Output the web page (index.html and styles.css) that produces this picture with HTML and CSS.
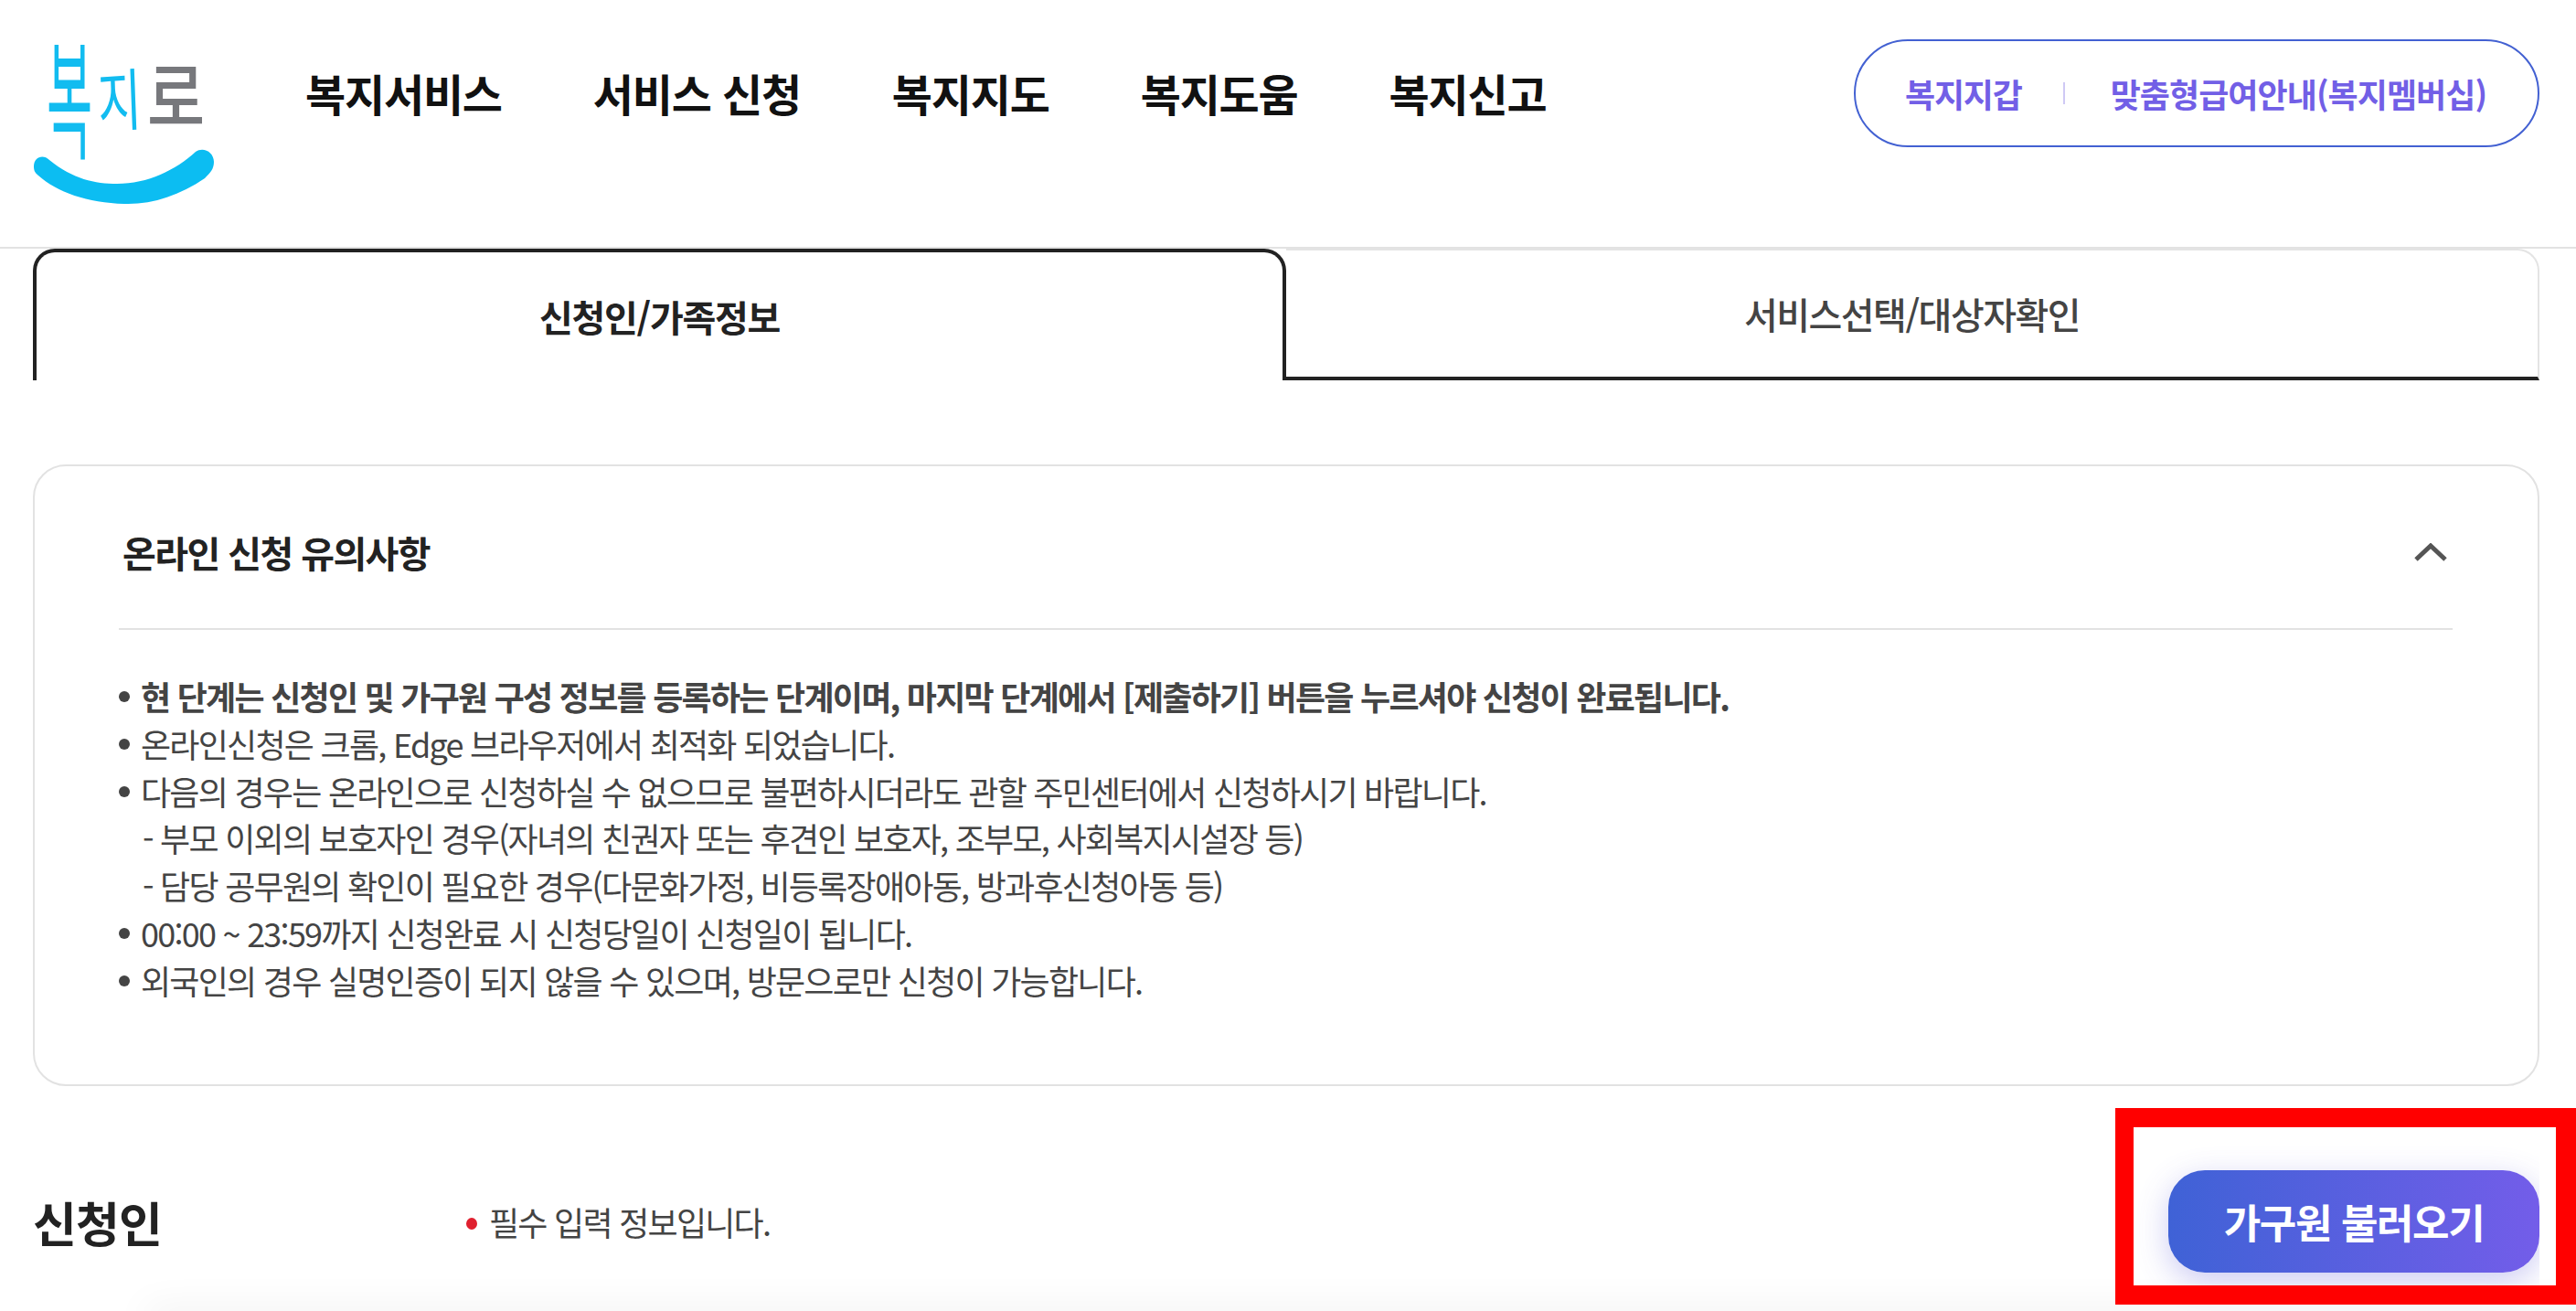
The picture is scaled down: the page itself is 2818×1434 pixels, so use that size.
FILE: index.html
```html
<!DOCTYPE html>
<html lang="ko">
<head>
<meta charset="utf-8"/>
<title>복지로</title>
<link rel="stylesheet" href="styles.css">
</head>
<body>
<!-- 상단 메뉴 -->
<header class="site-header">
  <a class="logo">
    <svg viewBox="0 0 200 190" width="200" height="190">
      <text class="logo-mark" transform="translate(15 127) scale(1.05 2.7)">복</text>
      <text class="logo-mark" transform="translate(72 103) scale(1 1.42) rotate(-3)">지</text>
      <text class="logo-mark logo-gray" transform="translate(125 101) scale(1.32 1.6)">로</text>
      <path class="logo-smile" d="M1 146C1 136 11 132 18 139C44 160 68 165 92 165C126 165 156 150 178 130C186 124 198 130 198 141C198 149 194 153 188 159C160 178 130 188 100 187C60 186 26 174 6 156C2 153 1 150 1 146Z"></path>
    </svg>
  </a>
  <nav class="main-nav">
    <a>복지서비스</a>
    <a>서비스 신청</a>
    <a>복지지도</a>
    <a>복지도움</a>
    <a>복지신고</a>
  </nav>
  <div class="util-pill">
    <a>복지지갑</a>
    <span class="util-divider"></span>
    <a class="util-long">맞춤형급여안내(복지멤버십)</a>
  </div>
</header>

<!-- 탭 -->
<div class="tabs">
  <div class="tab tab-active">신청인/가족정보</div>
  <div class="tab">서비스선택/대상자확인</div>
</div>

<!-- 유의사항 -->
<section class="notice-card">
  <div class="notice-head">
    <h3>온라인 신청 유의사항</h3>
    <svg class="chevron" viewBox="0 0 36 20" width="36" height="20">
      <path d="M2 18L18 3L34 18"></path>
    </svg>
  </div>
  <ul class="notice-list">
    <li class="strong">현 단계는 신청인 및 가구원 구성 정보를 등록하는 단계이며, 마지막 단계에서 [제출하기] 버튼을 누르셔야 신청이 완료됩니다.</li>
    <li>온라인신청은 크롬, Edge 브라우저에서 최적화 되었습니다.</li>
    <li>다음의 경우는 온라인으로 신청하실 수 없으므로 불편하시더라도 관할 주민센터에서 신청하시기 바랍니다.</li>
    <li class="sub">- 부모 이외의 보호자인 경우(자녀의 친권자 또는 후견인 보호자, 조부모, 사회복지시설장 등)</li>
    <li class="sub">- 담당 공무원의 확인이 필요한 경우(다문화가정, 비등록장애아동, 방과후신청아동 등)</li>
    <li>00:00 ~ 23:59까지 신청완료 시 신청당일이 신청일이 됩니다.</li>
    <li>외국인의 경우 실명인증이 되지 않을 수 있으며, 방문으로만 신청이 가능합니다.</li>
  </ul>
</section>

<!-- 신청인 -->
<section class="applicant-row">
  <h2>신청인</h2>
  <p class="required-note">필수 입력 정보입니다.</p>
  <button class="btn-family">가구원 불러오기</button>
</section>

<div class="bottom-fade"></div>
<div class="red-mark"></div>
</body>
</html>
```

FILE: styles.css
```css
* {
  box-sizing: border-box;
}

html, body {
  height: 100%;
}

body {
  margin: 0;
  background: #fff;
  color: #222;
  font-family: "Noto Sans CJK KR", "Noto Sans", sans-serif;
  overflow: hidden;
  position: relative;
}

h2, h3, p, ul {
  margin: 0;
  padding: 0;
}

/* 상단 메뉴 */
.site-header {
  display: flex;
  align-items: center;
  height: 272px;
  padding: 0 40px 66px 36px;
  border-bottom: 2px solid #e2e2e2;
}

.logo {
  display: block;
  width: 298px;
  height: 190px;
  margin-top: 58px;
  flex-shrink: 0;
}

.logo svg {
  display: block;
  overflow: visible;
}

.logo-mark {
  font-size: 52px;
  font-weight: 400;
  fill: #12bcf0;
}

.logo-gray {
  fill: #77787c;
  font-weight: 500;
}

.logo-smile {
  fill: #0cbdf2;
}

.main-nav {
  display: flex;
  gap: 100px;
  padding-bottom: 3px;
  font-size: 48px;
  font-weight: 700;
  letter-spacing: -1.2px;
  color: #111;
  white-space: nowrap;
}

.util-pill {
  display: flex;
  align-items: center;
  margin-left: auto;
  width: 750px;
  height: 118px;
  padding-left: 54px;
  border: 2px solid #4361d2;
  border-radius: 59px;
  font-size: 36px;
  font-weight: 700;
  letter-spacing: -1.2px;
  color: #725fe6;
  white-space: nowrap;
}

.util-long {
  letter-spacing: -0.95px;
}

.util-divider {
  width: 2px;
  height: 24px;
  margin: 0 50px 0 45px;
  background: #cfc9f5;
}

/* 탭 */
.tabs {
  display: flex;
  height: 144px;
  margin: 0 40px 0 36px;
}

.tab {
  flex: 1;
  display: flex;
  align-items: center;
  justify-content: center;
  border: 2px solid #e4e4e4;
  border-bottom: 4px solid #222;
  border-left: 0;
  border-radius: 0 24px 0 0;
  font-size: 40px;
  font-weight: 500;
  letter-spacing: -1.5px;
  color: #444;
}

.tab-active {
  flex: none;
  width: 1371px;
  padding-bottom: 1px;
  border: 4px solid #222;
  border-bottom: 0;
  border-radius: 24px 24px 0 0;
  font-weight: 700;
  letter-spacing: -1.3px;
  color: #222;
}

/* 유의사항 */
.notice-card {
  height: 680px;
  margin: 92px 40px 0 36px;
  padding: 0 93px 0 92px;
  border: 2px solid #e2e2e2;
  border-radius: 36px;
}

.notice-head {
  display: flex;
  align-items: center;
  justify-content: space-between;
  height: 179px;
  padding: 10px 6px 0 4px;
  border-bottom: 2px solid #e2e2e2;
}

.notice-head h3 {
  font-size: 40px;
  font-weight: 700;
  letter-spacing: -1.6px;
  color: #222;
}

.chevron path {
  fill: none;
  stroke: #555;
  stroke-width: 5;
}

.notice-list {
  list-style: none;
  padding-top: 47px;
  font-size: 36px;
  line-height: 51.8px;
  letter-spacing: -1.75px;
  color: #444;
  white-space: nowrap;
}

.notice-list li {
  position: relative;
  padding-left: 24px;
}

.notice-list li::before {
  content: "";
  position: absolute;
  left: 0;
  top: 20px;
  width: 12px;
  height: 12px;
  border-radius: 50%;
  background: #444;
}

.notice-list .strong {
  font-weight: 700;
}

.notice-list .sub {
  padding-left: 26px;
}

.notice-list .sub::before {
  display: none;
}

/* 신청인 */
.applicant-row {
  display: flex;
  align-items: center;
  height: 112px;
  margin: 92px 40px 0 36px;
}

.applicant-row h2 {
  width: 474px;
  font-size: 52px;
  font-weight: 700;
  letter-spacing: -0.9px;
  color: #222;
}

.required-note {
  position: relative;
  padding-left: 25px;
  font-size: 36px;
  letter-spacing: -1.75px;
  color: #444;
}

.required-note::before {
  content: "";
  position: absolute;
  left: 0;
  top: 22px;
  width: 12px;
  height: 13px;
  border-radius: 50%;
  background: #e0202f;
}

.btn-family {
  width: 406px;
  height: 112px;
  margin-left: auto;
  border: 0;
  border-radius: 40px;
  background: linear-gradient(90deg, #3f62d6, #735de9);
  box-shadow: 0 10px 34px rgba(86, 84, 214, 0.3);
  clip-path: inset(-50px 0 -50px -50px);
  font-family: inherit;
  font-size: 44px;
  font-weight: 700;
  letter-spacing: -1.4px;
  color: #fff;
}

/* 아래쪽 그림자 */
.bottom-fade {
  position: absolute;
  left: 160px;
  right: -60px;
  bottom: -14px;
  height: 14px;
  box-shadow: 0 0 40px rgba(0, 0, 0, 0.1);
}

/* 빨간 표시 */
.red-mark {
  position: absolute;
  left: 2314px;
  top: 1212px;
  width: 504px;
  height: 215px;
  border-style: solid;
  border-color: #f00;
  border-width: 21px 22px 21px 20px;
}
```
